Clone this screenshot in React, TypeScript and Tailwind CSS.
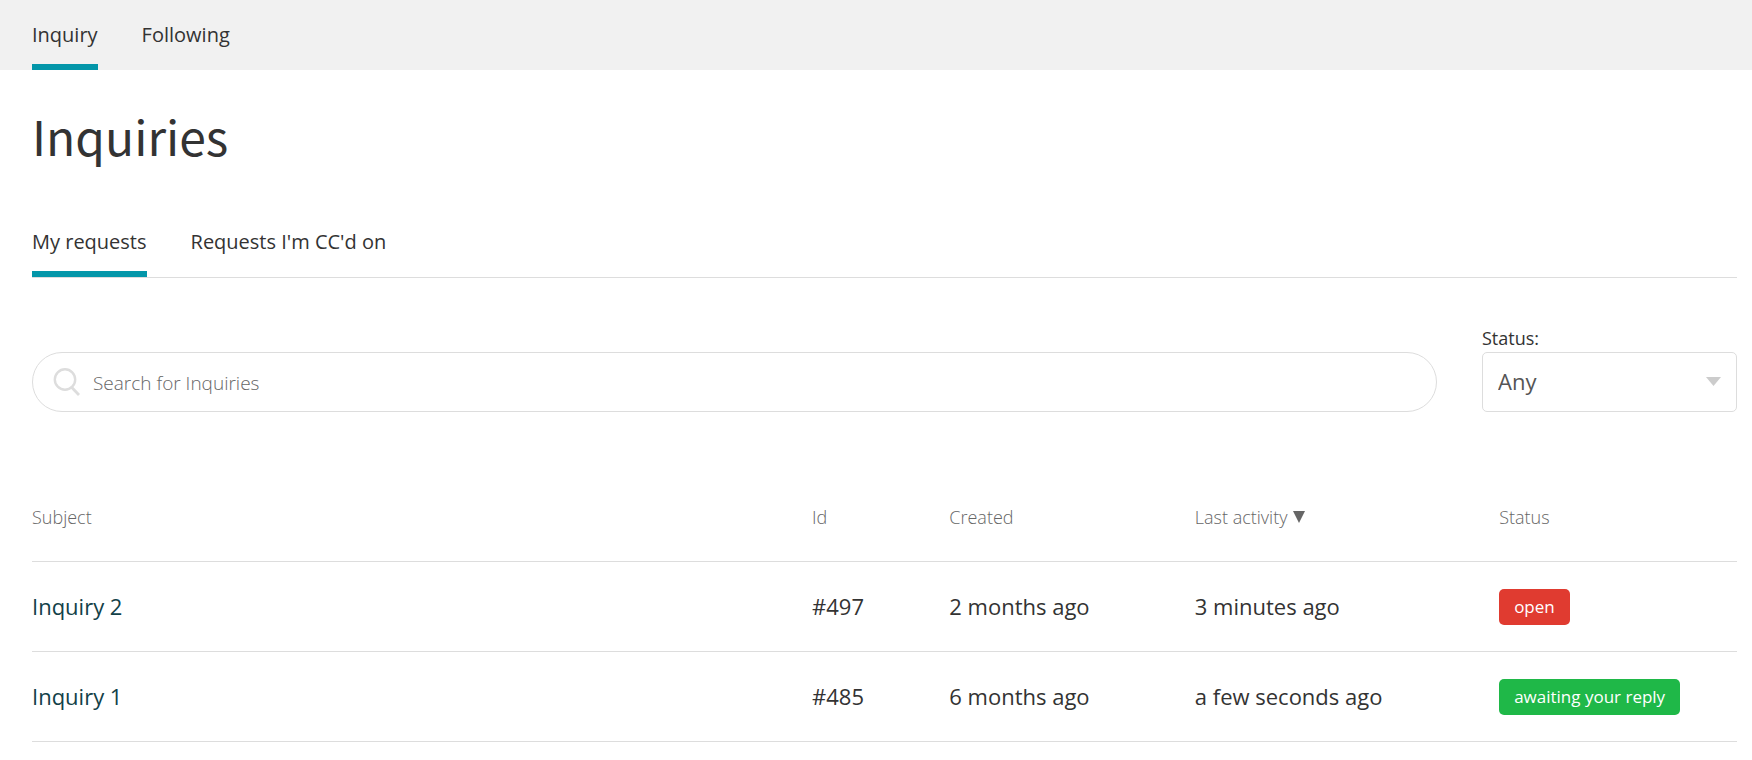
import { useState } from "react";
import clsx from "clsx";

interface Inquiry {
  subject: string;
  id: string;
  created: string;
  activity: string;
  status: "open" | "awaiting your reply";
}

const inquiries: Inquiry[] = [
  { subject: "Inquiry 2", id: "#497", created: "2 months ago", activity: "3 minutes ago", status: "open" },
  { subject: "Inquiry 1", id: "#485", created: "6 months ago", activity: "a few seconds ago", status: "awaiting your reply" },
];

interface TabsProps {
  label: string;
  items: string[];
  className?: string;
}

function Tabs({ label, items, className }: TabsProps) {
  const [active, setActive] = useState(items[0]);
  return (
    <nav aria-label={label} className={clsx("flex gap-11 text-xl", className)}>
      {items.map((item) => (
        <a
          key={item}
          href="#"
          aria-current={item === active ? "page" : undefined}
          onClick={(event) => {
            event.preventDefault();
            setActive(item);
          }}
          className={clsx(
            "flex h-[70px] items-center border-b-6 pt-1.5 whitespace-nowrap",
            item === active ? "border-[#0396a9]" : "border-transparent",
          )}
        >
          {item}
        </a>
      ))}
    </nav>
  );
}

function SearchIcon() {
  return (
    <svg aria-hidden="true" viewBox="0 0 28 30" className="h-[30px] w-7 shrink-0" fill="none" stroke="#dddddd" strokeWidth="2.4">
      <circle cx="12" cy="12.5" r="10.2" />
      <path d="M18.6 20.3 L26 28" strokeWidth="2.8" />
    </svg>
  );
}

function StatusBadge({ status }: { status: Inquiry["status"] }) {
  return (
    <span
      className={clsx(
        "mt-0.5 inline-flex h-9 items-center rounded-[5px] px-[15px] text-[17px] whitespace-nowrap text-white",
        status === "open" ? "bg-[#e03b30]" : "bg-[#1fb848]",
      )}
    >
      {status}
    </span>
  );
}

export default function App() {
  return (
    <div className="bg-white font-['Open_Sans','Noto_Sans',sans-serif] text-[#333333]">
      <header className="bg-[#f1f1f1] pl-8">
        <Tabs label="Main" items={["Inquiry", "Following"]} />
      </header>

      <main className="pr-[15px] pl-8">
        <h1 className="pt-[29px] font-['Noto_Sans_CJK_JP','Noto_Sans',sans-serif] text-5xl leading-[72px] font-normal">
          Inquiries
        </h1>

        <Tabs
          label="Requests"
          items={["My requests", "Requests I'm CC'd on"]}
          className="mt-9 border-b border-[#dddddd]"
        />

        <form className="flex items-end gap-[45px] pt-[46px]" onSubmit={(event) => event.preventDefault()}>
          <div className="flex h-[60px] flex-1 items-center gap-3 rounded-full border border-[#dddddd] pr-6 pl-5">
            <SearchIcon />
            <input
              type="search"
              aria-label="Search for Inquiries"
              placeholder="Search for Inquiries"
              className="min-w-0 flex-1 bg-transparent pt-0.5 text-[19px] font-light outline-none placeholder:text-[#666666]"
            />
          </div>
          <div className="flex w-[255px] flex-col">
            <label htmlFor="status" className="text-lg leading-7">
              Status:
            </label>
            <div className="relative">
              <select
                id="status"
                className="h-[60px] w-full appearance-none rounded-[5px] border border-[#dddddd] bg-white px-[15px] pb-0.5 text-[22px] text-[#555555] outline-none"
              >
                <option>Any</option>
                <option>Open</option>
                <option>Awaiting your reply</option>
                <option>Solved</option>
              </select>
              <svg aria-hidden="true" viewBox="0 0 15 9" className="pointer-events-none absolute top-[25px] right-4 h-[9px] w-[15px]" fill="#cccccc">
                <path d="M0 0 H15 L7.5 9 Z" />
              </svg>
            </div>
          </div>
        </form>

        <div className="pt-[60px]">
          <table className="w-full table-fixed border-collapse text-left">
            <colgroup>
              <col className="w-[45.75%]" />
              <col className="w-[8.05%]" />
              <col className="w-[14.4%]" />
              <col className="w-[17.85%]" />
              <col />
            </colgroup>
            <thead>
              <tr className="h-[89px] border-b border-[#dddddd] text-lg text-[#666666]">
                <th className="pt-0.5 font-light">Subject</th>
                <th className="pt-0.5 font-light">Id</th>
                <th className="pt-0.5 font-light">Created</th>
                <th className="pt-0.5 font-light" aria-sort="descending">
                  <button type="button" className="flex items-center gap-1.5">
                    Last activity
                    <svg aria-hidden="true" viewBox="0 0 12 12" className="size-3" fill="#666666">
                      <path d="M0 0 H12 L6 12 Z" />
                    </svg>
                  </button>
                </th>
                <th className="pt-0.5 font-light">Status</th>
              </tr>
            </thead>
            <tbody>
              {inquiries.map((inquiry) => (
                <tr key={inquiry.id} className="h-[90px] border-b border-[#dddddd] text-[22px]">
                  <td>
                    <a href="#" className="text-[#124148]">
                      {inquiry.subject}
                    </a>
                  </td>
                  <td>{inquiry.id}</td>
                  <td>{inquiry.created}</td>
                  <td>{inquiry.activity}</td>
                  <td>
                    <StatusBadge status={inquiry.status} />
                  </td>
                </tr>
              ))}
            </tbody>
          </table>
        </div>
      </main>
    </div>
  );
}
